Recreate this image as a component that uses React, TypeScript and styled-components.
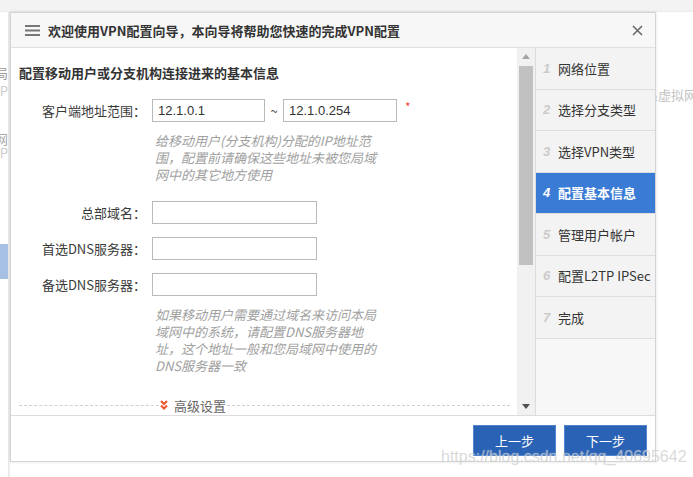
import React from "react";
import styled, {createGlobalStyle} from "styled-components";

const GlobalStyle = createGlobalStyle`
  html, body {
    margin: 0;
    padding: 0;
    background: #fff;
    font-family: "Noto Sans CJK SC", "Noto Sans", sans-serif;
  }
`;

const steps = [
    {no: "1", text: "网络位置"},
    {no: "2", text: "选择分支类型"},
    {no: "3", text: "选择VPN类型"},
    {no: "4", text: "配置基本信息"},
    {no: "5", text: "管理用户帐户"},
    {no: "6", text: "配置L2TP IPSec"},
    {no: "7", text: "完成"},
];

const activeStep = 3;

const App = () => {
    return (
        <>
            <GlobalStyle/>
            <Page>
                <TopStrip/>
                <Backdrop>
                    <LeftRail>
                        <RailText $top={55} $tone="#9a9a9a">配置局</RailText>
                        <RailText $top={6} $tone="#cccccc">VP</RailText>
                        <RailText $top={36} $tone="#a8a8a8">虚拟网</RailText>
                        <RailText $top={2} $tone="#cccccc">VP</RailText>
                        <RailText $top={46} $tone="#dddddd">。</RailText>
                        <RailBlock/>
                    </LeftRail>
                    <Center/>
                    <RightRail>
                        <FadedText>系虚拟网</FadedText>
                    </RightRail>
                </Backdrop>

                <Dialog>
                    <Header>
                        <MenuIcon width="15" height="11" viewBox="0 0 15 11">
                            <rect x="0" y="0" width="15" height="2" fill="#777"/>
                            <rect x="0" y="4.5" width="15" height="2" fill="#777"/>
                            <rect x="0" y="9" width="15" height="2" fill="#777"/>
                        </MenuIcon>
                        <Title>欢迎使用VPN配置向导，本向导将帮助您快速的完成VPN配置</Title>
                        <CloseIcon width="11" height="11" viewBox="0 0 11 11">
                            <path d="M1 1 L10 10 M10 1 L1 10" stroke="#666" strokeWidth="1.5"/>
                        </CloseIcon>
                    </Header>

                    <Body>
                        <Content>
                            <Heading>配置移动用户或分支机构连接进来的基本信息</Heading>

                            <FormRow $gap={17}>
                                <Label>客户端地址范围：</Label>
                                <Input $width={113} defaultValue="12.1.0.1"/>
                                <Tilde>~</Tilde>
                                <Input $width={114} defaultValue="12.1.0.254"/>
                                <Required>*</Required>
                            </FormRow>
                            <Hint>
                                给移动用户(分支机构)分配的IP地址范<br/>
                                围，配置前请确保这些地址未被您局域<br/>
                                网中的其它地方使用
                            </Hint>

                            <FormRow $gap={18}>
                                <Label>总部域名：</Label>
                                <Input $width={165}/>
                            </FormRow>
                            <FormRow $gap={13}>
                                <Label>首选DNS服务器：</Label>
                                <Input $width={165}/>
                            </FormRow>
                            <FormRow $gap={13}>
                                <Label>备选DNS服务器：</Label>
                                <Input $width={165}/>
                            </FormRow>
                            <Hint>
                                如果移动用户需要通过域名来访问本局<br/>
                                域网中的系统，请配置DNS服务器地<br/>
                                址，这个地址一般和您局域网中使用的<br/>
                                DNS服务器一致
                            </Hint>

                            <Advanced>
                                <Dash $fixed/>
                                <AdvancedLink>
                                    <svg width="8" height="10" viewBox="0 0 8 10">
                                        <path d="M1 1 L4 4 L7 1 M1 5.5 L4 8.5 L7 5.5" stroke="#f0522d" strokeWidth="2"
                                              fill="none"/>
                                    </svg>
                                    高级设置
                                </AdvancedLink>
                                <Dash/>
                            </Advanced>
                        </Content>

                        <ScrollBar>
                            <ScrollArrow>
                                <svg width="8" height="5" viewBox="0 0 8 5">
                                    <path d="M0 5 L4 0 L8 5 Z" fill="#a3a3a3"/>
                                </svg>
                            </ScrollArrow>
                            <ScrollTrack>
                                <Thumb/>
                            </ScrollTrack>
                            <ScrollArrow>
                                <svg width="8" height="5" viewBox="0 0 8 5">
                                    <path d="M0 0 L8 0 L4 5 Z" fill="#505050"/>
                                </svg>
                            </ScrollArrow>
                        </ScrollBar>

                        <StepNav>
                            {steps.map((step, i) => (
                                <StepItem key={step.no} $active={i === activeStep}>
                                    <StepNo $active={i === activeStep}>{step.no}</StepNo>
                                    {step.text}
                                </StepItem>
                            ))}
                        </StepNav>
                    </Body>

                    <Footer>
                        <Button>上一步</Button>
                        <Button>下一步</Button>
                    </Footer>
                </Dialog>

                <Watermark>https://blog.csdn.net/qq_40695642</Watermark>
            </Page>
        </>
    );
};

export default App;


const Page = styled.div`
  position: relative;
  width: 693px;
  height: 477px;
  overflow: hidden;
  background: #fff;
  display: flex;
  flex-direction: column;
`

const TopStrip = styled.div`
  height: 11px;
  background: #f3f3f3;
  border-bottom: 1px solid #ececec;
`

const Backdrop = styled.div`
  flex: 1;
  display: flex;
`

const LeftRail = styled.div`
  width: 8px;
  border-right: 2px solid #ececec;
  overflow: hidden;
  display: flex;
  flex-direction: column;
`

const RailText = styled.div<{ $top: number; $tone: string }>`
  margin-top: ${p => p.$top}px;
  display: flex;
  justify-content: flex-end;
  white-space: nowrap;
  font-size: 13px;
  line-height: 12px;
  color: ${p => p.$tone};
`

const RailBlock = styled.div`
  margin-top: 27px;
  height: 35px;
  background: #a6c1e3;
`

const Center = styled.div`
  flex: 1;
`

const RightRail = styled.div`
  width: 48px;
  overflow: hidden;
  display: flex;
  justify-content: flex-start;
  padding-top: 76px;
`

const FadedText = styled.div`
  font-size: 13px;
  line-height: 14px;
  height: 14px;
  color: #c4c4c4;
  white-space: nowrap;
`

const Dialog = styled.div`
  position: absolute;
  left: 10px;
  top: 12px;
  width: 646px;
  height: 450px;
  box-sizing: border-box;
  border: 1px solid #d4d4d4;
  box-shadow: 0 0 3px rgba(0, 0, 0, 0.12);
  background: #fff;
  display: flex;
  flex-direction: column;
`

const Header = styled.div`
  height: 34px;
  flex-shrink: 0;
  display: flex;
  align-items: center;
  padding: 0 12px 0 14px;
  background: #f7f7f7;
  border-bottom: 1px solid #e0e0e0;
`

const MenuIcon = styled.svg`
  flex-shrink: 0;
  margin-right: 8px;
`

const Title = styled.div`
  flex: 1;
  font-size: 13px;
  font-weight: bold;
  color: #333;
  white-space: nowrap;
`

const CloseIcon = styled.svg`
  flex-shrink: 0;
`

const Body = styled.div`
  height: 367px;
  flex-shrink: 0;
  display: flex;
`

const Content = styled.div`
  width: 506px;
  box-sizing: border-box;
  padding: 16px 7px 0 8px;
  overflow: hidden;
`

const Heading = styled.div`
  font-size: 13px;
  line-height: 18px;
  font-weight: bold;
  color: #333;
`

const FormRow = styled.div<{ $gap: number }>`
  margin-top: ${p => p.$gap}px;
  display: flex;
  align-items: center;
  height: 23px;
`

const Label = styled.div`
  width: 127px;
  margin-right: 6px;
  text-align: right;
  font-size: 13px;
  color: #3a3a3a;
  white-space: nowrap;
`

const Input = styled.input<{ $width: number }>`
  width: ${p => p.$width}px;
  height: 23px;
  box-sizing: border-box;
  border: 1px solid #b9b9b9;
  padding: 0 5px;
  font-family: "Liberation Sans", "Noto Sans", sans-serif;
  font-size: 13px;
  color: #333;
  outline: none;
`

const Tilde = styled.span`
  width: 18px;
  text-align: center;
  font-size: 13px;
  color: #555;
`

const Required = styled.span`
  margin-left: 8px;
  margin-top: -8px;
  font-size: 12px;
  color: #f04d3c;
`

const Hint = styled.div`
  margin-top: 10px;
  padding-left: 136px;
  font-size: 13px;
  line-height: 17px;
  font-style: italic;
  color: #a0a0a0;
  white-space: nowrap;
`

const Advanced = styled.div`
  margin-top: 22px;
  display: flex;
  align-items: center;
  height: 18px;
`

const Dash = styled.div<{ $fixed?: boolean }>`
  ${p => p.$fixed ? "width: 140px;" : "flex: 1;"}
  border-top: 1px dashed #cfcfcf;
`

const AdvancedLink = styled.div`
  display: flex;
  align-items: center;
  gap: 6px;
  padding: 0 1px;
  font-size: 13px;
  color: #666;
`

const ScrollBar = styled.div`
  width: 18px;
  display: flex;
  flex-direction: column;
  background: #f1f1f1;
`

const ScrollArrow = styled.div`
  height: 17px;
  display: flex;
  align-items: center;
  justify-content: center;
`

const ScrollTrack = styled.div`
  flex: 1;
  padding: 1px 2px 0 2px;
`

const Thumb = styled.div`
  height: 199px;
  background: #c1c1c1;
`

const StepNav = styled.div`
  flex: 1;
  border-left: 1px solid #dcdcdc;
  background: #f7f7f7;
`

const StepItem = styled.div<{ $active?: boolean }>`
  height: 40.5px;
  display: flex;
  align-items: center;
  padding-left: 7px;
  border-bottom: 1px solid #dedede;
  background: ${p => p.$active ? "#3a7bd5" : "#f3f3f3"};
  color: ${p => p.$active ? "#fff" : "#333"};
  font-weight: ${p => p.$active ? "bold" : "normal"};
  font-size: 13px;
  white-space: nowrap;
`

const StepNo = styled.span<{ $active?: boolean }>`
  width: 15px;
  font-family: "Liberation Sans", sans-serif;
  font-style: italic;
  font-weight: bold;
  font-size: 13px;
  color: ${p => p.$active ? "#fff" : "#cbcbcb"};
`

const Footer = styled.div`
  flex: 1;
  display: flex;
  justify-content: flex-end;
  align-items: flex-start;
  gap: 8px;
  padding: 9px 8px 0 0;
  border-top: 1px solid #dcdcdc;
`

const Button = styled.button`
  width: 83px;
  height: 31px;
  border: 1px solid #4f86cf;
  background: #2a63b5;
  color: #fff;
  font-family: "Noto Sans CJK SC", sans-serif;
  font-size: 13px;
  cursor: pointer;
`

const Watermark = styled.div`
  position: absolute;
  left: 441px;
  top: 448px;
  font-family: "Liberation Sans", sans-serif;
  font-size: 16px;
  color: rgba(180, 180, 180, 0.5);
  text-shadow: 0 0 1px rgba(255, 255, 255, 0.6);
  white-space: nowrap;
  pointer-events: none;
`
